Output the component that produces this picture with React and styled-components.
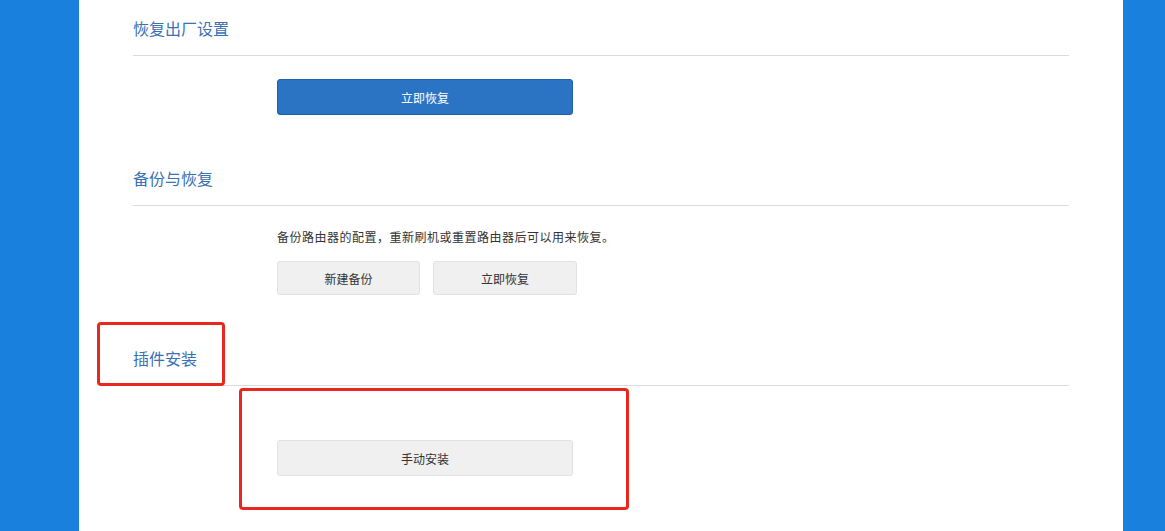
import React from 'react'
import styled, { createGlobalStyle } from 'styled-components'

const GlobalStyle = createGlobalStyle`
  html, body {
    margin: 0;
    padding: 0;
    background: #1a80dd;
    font-family: "Noto Sans CJK SC", "Microsoft YaHei", "Noto Sans", sans-serif;
  }
`

const Page = styled.div`
  height: 531px;
  overflow: hidden;
  padding: 0 42px 0 79px;
`

const Panel = styled.div`
  position: relative;
  background: #fff;
  height: 100%;
  padding: 0 54px;
`

const Section = styled.section`
  padding-bottom: 35px;
`

const Heading = styled.div`
  padding: 16px 0 15px;
  border-bottom: 1px solid #dcdcdc;
  h3 {
    margin: 0;
    font-size: 16px;
    line-height: 24px;
    font-weight: normal;
    color: #3a71b4;
  }
`

const Body = styled.div`
  padding: ${(p) => p.$top || 23}px 0 0 144px;
`

const Desc = styled.p`
  margin: 0 0 15px;
  font-size: 12px;
  line-height: 18px;
  letter-spacing: 0.5px;
  color: #333;
`

const Row = styled.div`
  display: flex;
  gap: 13px;
`

const Button = styled.button`
  display: block;
  width: ${(p) => p.$w}px;
  height: ${(p) => p.$h || 36}px;
  padding: 0;
  border-radius: 3px;
  font-family: inherit;
  font-size: 12px;
  cursor: pointer;
  border: 1px solid ${(p) => (p.$primary ? '#1f60a8' : '#e2e2e2')};
  background: ${(p) => (p.$primary ? '#2a74c3' : '#f0f0f0')};
  color: ${(p) => (p.$primary ? '#fff' : '#333')};
`

const Mark = styled.div`
  position: absolute;
  left: ${(p) => p.$x}px;
  top: ${(p) => p.$y}px;
  width: ${(p) => p.$w}px;
  height: ${(p) => p.$h}px;
  border: 3px solid #e8281e;
  border-radius: 4px;
  box-sizing: border-box;
  pointer-events: none;
`

export default function App() {
  return (
    <>
      <GlobalStyle />
      <Page>
        <Panel>
          <Section>
            <Heading><h3>恢复出厂设置</h3></Heading>
            <Body>
              <Button $primary $w={296}>立即恢复</Button>
            </Body>
          </Section>
          <Section>
            <Heading><h3>备份与恢复</h3></Heading>
            <Body $top={22}>
              <Desc>备份路由器的配置，重新刷机或重置路由器后可以用来恢复。</Desc>
              <Row>
                <Button $w={143} $h={34}>新建备份</Button>
                <Button $w={144} $h={34}>立即恢复</Button>
              </Row>
            </Body>
          </Section>
          <Section>
            <Heading><h3>插件安装</h3></Heading>
            <Body $top={54}>
              <Button $w={296}>手动安装</Button>
            </Body>
          </Section>
          <Mark $x={18} $y={322} $w={128} $h={64} />
          <Mark $x={160} $y={388} $w={390} $h={122} />
        </Panel>
      </Page>
    </>
  )
}
